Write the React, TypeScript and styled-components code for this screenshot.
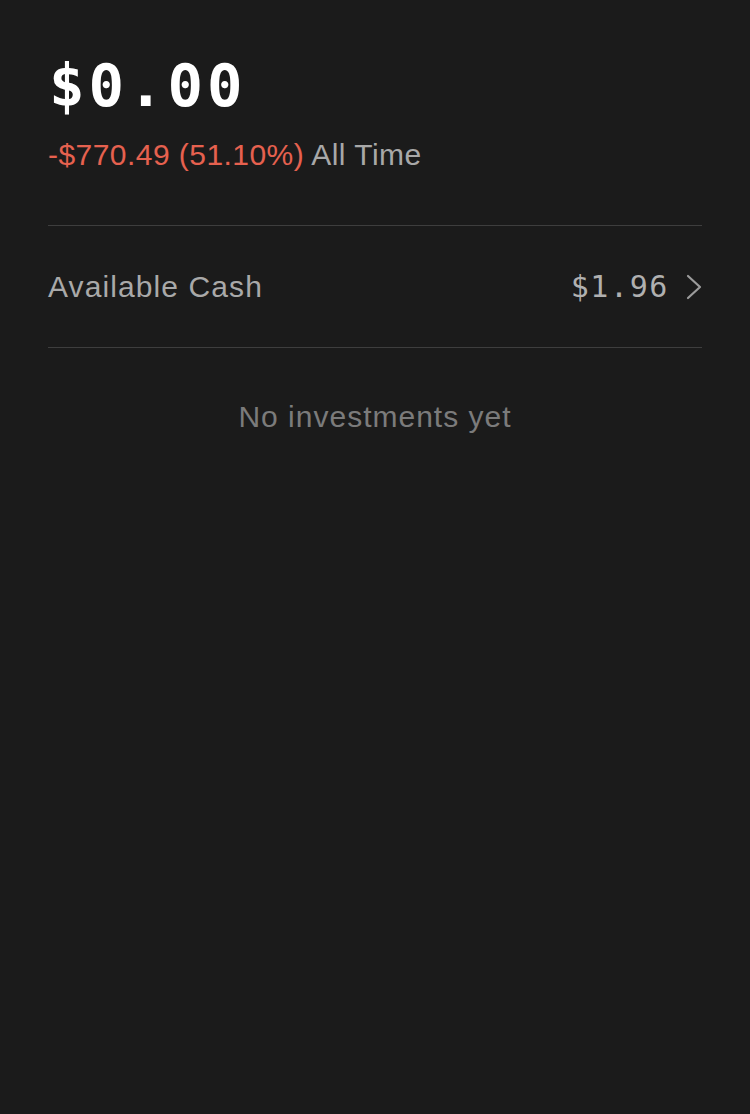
import * as React from "react";
import styled, { createGlobalStyle } from "styled-components";

const GlobalStyle = createGlobalStyle`
  html, body {
    margin: 0;
    padding: 0;
    background: #1b1b1b;
  }
  #root {
    min-height: 100vh;
  }
`;

const Screen = styled.div`
  min-height: 1114px;
  background: #1b1b1b;
  padding: 0 48px;
  box-sizing: border-box;
  font-family: "Liberation Sans", Arial, sans-serif;
`;

const Header = styled.div`
  display: flex;
  flex-direction: column;
  padding-top: 51px;
  padding-bottom: 52px;
  border-bottom: 1px solid #3e3e3e;
`;

const Balance = styled.div`
  font-family: "DejaVu Sans Mono", "Liberation Mono", monospace;
  font-weight: bold;
  font-size: 59px;
  letter-spacing: 4px;
  line-height: 70px;
  color: #ffffff;
  margin-left: 1px;
`;

const Change = styled.div`
  font-size: 30px;
  line-height: 36px;
  letter-spacing: 0.45px;
  margin-top: 16px;
`;

const Tone = styled.span<{ $tone: "loss" | "muted" }>`
  color: ${({ $tone }) => ($tone === "loss" ? "#e6614f" : "#a8a8a8")};
`;

const CashRow = styled.div`
  display: flex;
  align-items: center;
  justify-content: space-between;
  height: 121px;
  border-bottom: 1px solid #3e3e3e;
  cursor: pointer;
`;

const Label = styled.span`
  font-size: 30px;
  letter-spacing: 1.1px;
  color: #a9a9a9;
`;

const Amount = styled.span`
  display: flex;
  align-items: center;
  gap: 17px;
  font-family: "DejaVu Sans Mono", "Liberation Mono", monospace;
  font-size: 30px;
  letter-spacing: 1.6px;
  color: #b0b0b0;
`;

const Empty = styled.div`
  text-align: center;
  padding-top: 52px;
  font-size: 30px;
  letter-spacing: 1px;
  color: #7b7b7b;
`;

const Chevron = () => (
  <svg width="16" height="26" viewBox="0 0 16 26" fill="none">
    <polyline
      points="2,2 14,13 2,24"
      stroke="#9c9c9c"
      strokeWidth="2.2"
      strokeLinecap="round"
      strokeLinejoin="round"
    />
  </svg>
);

export default function App() {
  return (
    <>
      <GlobalStyle />
      <Screen>
        <Header>
          <Balance>$0.00</Balance>
          <Change>
            <Tone $tone="loss">-$770.49 (51.10%)</Tone>{" "}
            <Tone $tone="muted">All Time</Tone>
          </Change>
        </Header>
        <CashRow>
          <Label>Available Cash</Label>
          <Amount>
            $1.96
            <Chevron />
          </Amount>
        </CashRow>
        <Empty>No investments yet</Empty>
      </Screen>
    </>
  );
}
